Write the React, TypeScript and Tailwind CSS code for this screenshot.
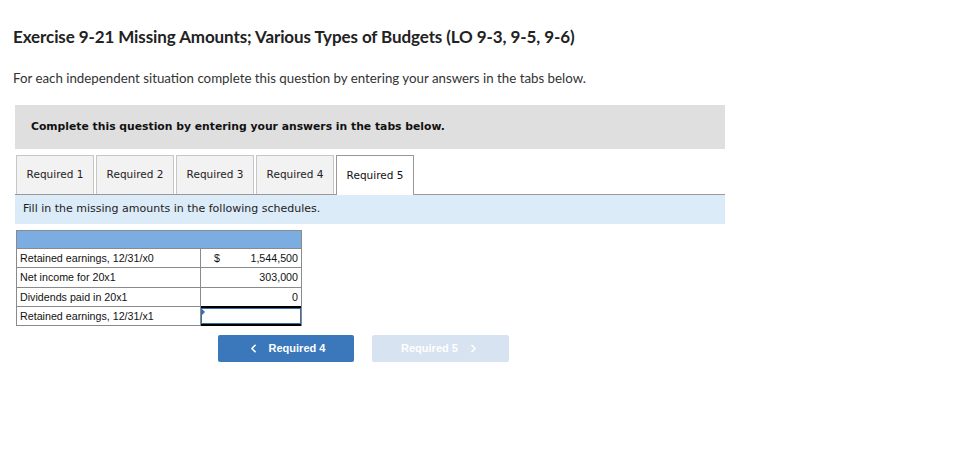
import { ChevronLeft, ChevronRight } from "lucide-react";

const TABS = ["Required 1", "Required 2", "Required 3", "Required 4", "Required 5"];

const ROWS = [
  { label: "Retained earnings, 12/31/x0", sign: "$", value: "1,544,500" },
  { label: "Net income for 20x1", sign: "", value: "303,000" },
  { label: "Dividends paid in 20x1", sign: "", value: "0" },
];

export default function App() {
  return (
    <div className="w-[970px] h-[460px] bg-white text-[#222] font-['Lato','Open_Sans',sans-serif]">
      <div className="pl-[13px] pt-[26px]">
        <h1 className="text-[17px] font-bold leading-[22px] text-[#222] tracking-[-0.1px]">
          Exercise 9-21 Missing Amounts; Various Types of Budgets (LO 9-3, 9-5, 9-6)
        </h1>
        <p className="mt-[21px] text-[13.3px] leading-[18px] text-[#333]">
          For each independent situation complete this question by entering your answers in the tabs below.
        </p>
      </div>

      <div className="ml-[15px] mt-[18px] w-[710px]">
        {/* instructions banner */}
        <div className="h-[44px] bg-[#dfdfdf] pl-[16px] flex items-center font-['DejaVu_Sans',sans-serif] text-[10.8px] font-bold text-[#111]">
          Complete this question by entering your answers in the tabs below.
        </div>

        {/* tabs */}
        <div className="mt-[6px] flex gap-[2px] pl-[1px] border-b border-[#999] font-['DejaVu_Sans',sans-serif] text-[10.5px]">
          {TABS.map((t, i) =>
            i === 4 ? (
              <div
                key={t}
                className="w-[78px] h-[40px] -mb-px bg-white border border-b-0 border-[#999] flex items-center justify-center text-[#111]"
              >
                {t}
              </div>
            ) : (
              <div
                key={t}
                className="w-[78px] h-[39px] bg-[#f2f2f2] border border-b-0 border-[#c6c6c6] flex items-center justify-center text-[#222]"
              >
                {t}
              </div>
            )
          )}
        </div>

        <div className="h-[29px] bg-[#dbebf8] pl-[8px] flex items-center font-['DejaVu_Sans',sans-serif] text-[11px] text-[#222]">
          Fill in the missing amounts in the following schedules.
        </div>

        {/* schedule */}
        <div className="mt-[6px] ml-[1px] w-[286px] border border-[#8a8a8a] font-['Liberation_Sans',Arial,sans-serif] text-[10.7px] text-[#111]">
          <div className="h-[18px] bg-[#7badE3] border-b border-[#8a8a8a]" />
          {ROWS.map((r) => (
            <div key={r.label} className="flex h-[19.3px] border-b border-[#8a8a8a]">
              <div className="w-[184px] pl-[3px] flex items-center border-r border-[#8a8a8a]">{r.label}</div>
              <div className="flex-1 flex items-center justify-between pl-[13px] pr-[3px]">
                <span>{r.sign}</span>
                <span>{r.value}</span>
              </div>
            </div>
          ))}
          <div className="flex h-[18px]">
            <div className="w-[184px] pl-[3px] flex items-center border-r border-[#8a8a8a]">
              Retained earnings, 12/31/x1
            </div>
            <div className="relative flex-1 border-t-2 border-b-2 border-black -mt-[1px] -mb-[1px]">
              <div className="h-full border border-[#3a6fae] bg-white" />
              <div className="absolute left-0 top-0 w-0 h-0 border-t-[4px] border-b-[4px] border-l-[4px] border-t-transparent border-b-transparent border-l-[#3a6fae]" />
            </div>
          </div>
        </div>

        {/* nav buttons */}
        <div className="mt-[9px] ml-[203px] flex gap-[18px] font-['Liberation_Sans',Arial,sans-serif] text-[11px] font-bold text-white">
          <div className="w-[136px] h-[27px] rounded-[2px] bg-[#3a77bb] flex items-center justify-center gap-[9px]">
            <ChevronLeft size={13} strokeWidth={3} />
            <span>Required 4</span>
          </div>
          <div className="w-[137px] h-[27px] rounded-[2px] bg-[#d7e3f0] flex items-center justify-center gap-[9px]">
            <span>Required 5</span>
            <ChevronRight size={13} strokeWidth={3} />
          </div>
        </div>
      </div>
    </div>
  );
}
